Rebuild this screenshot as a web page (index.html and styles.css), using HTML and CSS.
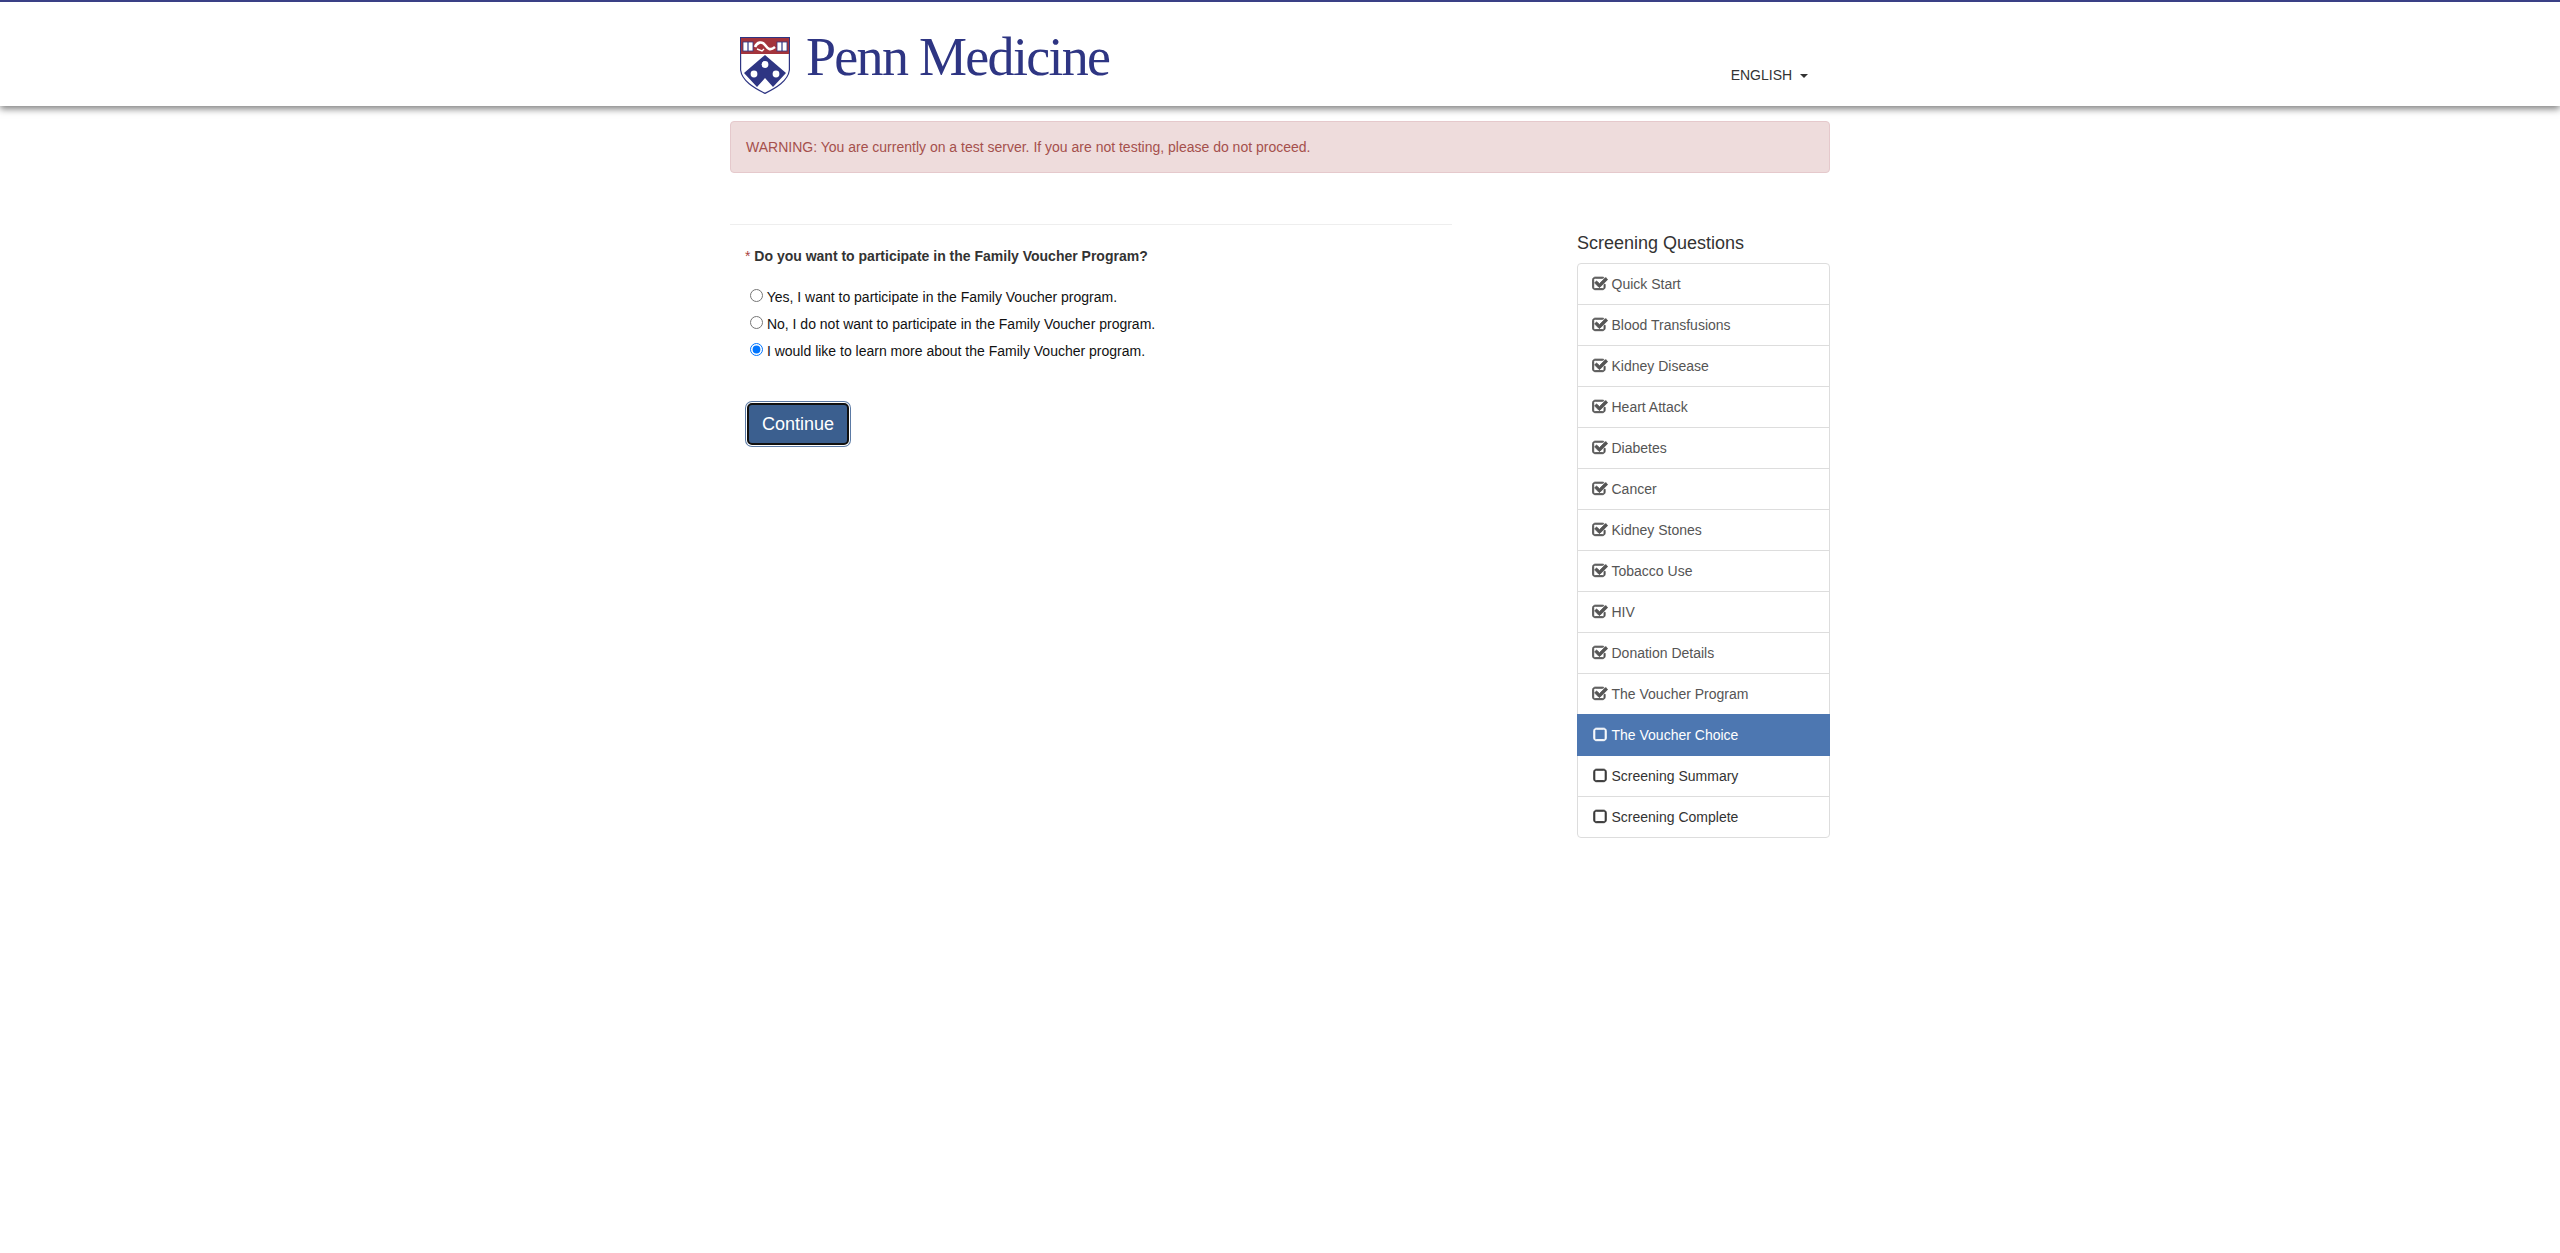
FILE: index.html
```html
<!doctype html>
<html>
    <head>
        <title>Penn Medicine - Screening Questions</title>
        <link rel="stylesheet" href="styles.css">
    </head>
    <body>
        <svg class="icon_defs" width="0" height="0">
            <symbol id="icon_checked" viewBox="0 0 1792 1792">
                <path fill="currentColor" stroke="currentColor" stroke-width="100" d="M1472 930v318q0 119-84.5 203.5t-203.5 84.5h-832q-119 0-203.5-84.5t-84.5-203.5v-832q0-119 84.5-203.5t203.5-84.5h832q63 0 117 25 15 7 18 23 3 17-9 29l-49 49q-10 10-23 10-3 0-9-2-23-6-45-6h-832q-66 0-113 47t-47 113v832q0 66 47 113t113 47h832q66 0 113-47t47-113v-254q0-13 9-22l64-64q10-10 23-10 6 0 12 3 20 8 20 29zm231-489l-814 814q-24 24-57 24t-57-24l-430-430q-24-24-24-57t24-57l110-110q24-24 57-24t57 24l263 263 647-647q24-24 57-24t57 24l110 110q24 24 24 57t-24 57z"/>
            </symbol>
            <symbol id="icon_empty" viewBox="0 0 1792 1792">
                <path fill="currentColor" stroke="currentColor" stroke-width="100" d="M1312 256h-832q-66 0-113 47t-47 113v832q0 66 47 113t113 47h832q66 0 113-47t47-113v-832q0-66-47-113t-113-47zm288 160v832q0 119-84.5 203.5t-203.5 84.5h-832q-119 0-203.5-84.5t-84.5-203.5v-832q0-119 84.5-203.5t203.5-84.5h832q119 0 203.5 84.5t84.5 203.5z"/>
            </symbol>
        </svg>

        <div class="top_bar">
            <div class="page_width header_row">
                <div class="logo">
                    <svg class="shield" width="50" height="57" viewBox="0 0 50 57">
                        <path d="M0.6 0.6 H49.4 V33 C48 44 36 51 25 56.4 C14 51 2 44 0.6 33 Z" fill="#fff" stroke="#2e3583" stroke-width="1.2"/>
                        <rect x="1" y="1" width="48" height="16" fill="#a3343c"/>
                        <rect x="3" y="5" width="10" height="9" fill="#fff" stroke="#2e3583" stroke-width="0.8"/>
                        <path d="M8 5 V14" stroke="#2e3583" stroke-width="1.2"/>
                        <rect x="37" y="5" width="10" height="9" fill="#fff" stroke="#2e3583" stroke-width="0.8"/>
                        <path d="M42 5 V14" stroke="#2e3583" stroke-width="1.2"/>
                        <path d="M15 10 C17 5 22 4 25 8 C28 12 30 14 35 10" fill="none" stroke="#fff" stroke-width="2.6"/>
                        <path d="M17 12 L22 14 L24 12" fill="none" stroke="#fff" stroke-width="1.4"/>
                        <path d="M25 18 L46 36 L33 50 L25 41 L17 50 L4 36 Z" fill="#2e3583"/>
                        <circle cx="25" cy="27.5" r="3.4" fill="#fff"/>
                        <circle cx="14" cy="37" r="3.4" fill="#fff"/>
                        <circle cx="36" cy="37" r="3.4" fill="#fff"/>
                    </svg>
                    <span class="logo_text">Penn Medicine</span>
                </div>
                <a class="lang_menu" href="#">ENGLISH <span class="caret"></span></a>
            </div>
        </div>

        <div class="page_width">
            <div class="alert">WARNING: You are currently on a test server. If you are not testing, please do not proceed.</div>

            <div class="columns">
                <div class="main_col">
                    <hr class="rule">
                    <form class="question">
                        <p class="question_title"><span class="required">*</span> Do you want to participate in the Family Voucher Program?</p>
                        <label class="choice"><input type="radio" name="voucher"> Yes, I want to participate in the Family Voucher program.</label>
                        <label class="choice"><input type="radio" name="voucher"> No, I do not want to participate in the Family Voucher program.</label>
                        <label class="choice"><input type="radio" name="voucher" checked> I would like to learn more about the Family Voucher program.</label>
                        <button class="btn_continue" type="button">Continue</button>
                    </form>
                </div>

                <div class="side_col">
                    <h4>Screening Questions</h4>
                    <ul class="steps">
                        <li class="done"><svg class="step_icon"><use href="#icon_checked"/></svg>Quick Start</li>
                        <li class="done"><svg class="step_icon"><use href="#icon_checked"/></svg>Blood Transfusions</li>
                        <li class="done"><svg class="step_icon"><use href="#icon_checked"/></svg>Kidney Disease</li>
                        <li class="done"><svg class="step_icon"><use href="#icon_checked"/></svg>Heart Attack</li>
                        <li class="done"><svg class="step_icon"><use href="#icon_checked"/></svg>Diabetes</li>
                        <li class="done"><svg class="step_icon"><use href="#icon_checked"/></svg>Cancer</li>
                        <li class="done"><svg class="step_icon"><use href="#icon_checked"/></svg>Kidney Stones</li>
                        <li class="done"><svg class="step_icon"><use href="#icon_checked"/></svg>Tobacco Use</li>
                        <li class="done"><svg class="step_icon"><use href="#icon_checked"/></svg>HIV</li>
                        <li class="done"><svg class="step_icon"><use href="#icon_checked"/></svg>Donation Details</li>
                        <li class="done"><svg class="step_icon"><use href="#icon_checked"/></svg>The Voucher Program</li>
                        <li class="active"><svg class="step_icon"><use href="#icon_empty"/></svg>The Voucher Choice</li>
                        <li><svg class="step_icon"><use href="#icon_empty"/></svg>Screening Summary</li>
                        <li><svg class="step_icon"><use href="#icon_empty"/></svg>Screening Complete</li>
                    </ul>
                </div>
            </div>
        </div>
    </body>
</html>
```

FILE: styles.css
```css
body {
    padding: 0;
    margin: 0;
    font-family: "Liberation Sans", Arial, sans-serif;
    font-size: 14px;
    color: #333;
    background-color: #fff;
}
.icon_defs {
    display: block;
    height: 0;
}
.page_width {
    width: 1100px;
    margin-left: auto;
    margin-right: auto;
}
.top_bar {
    height: 104px;
    border-top: 2px solid #3a4086;
    background-color: #fff;
    box-shadow: 0 3px 7px rgba(0, 0, 0, 0.5);
}
.header_row {
    display: flex;
    justify-content: space-between;
    height: 100%;
}
.logo {
    display: flex;
    align-items: flex-start;
    padding: 35px 0 0 10px;
}
.logo_text {
    margin: -10px 0 0 16px;
    font-family: "Liberation Serif", "Times New Roman", serif;
    font-size: 54px;
    line-height: 60px;
    letter-spacing: -1.7px;
    color: #2e3583;
}
.lang_menu {
    margin: 65px 22px 0 0;
    font-size: 14px;
    line-height: 16px;
    color: #333;
    text-decoration: none;
}
.caret {
    display: inline-block;
    width: 0;
    height: 0;
    margin-left: 4px;
    vertical-align: middle;
    border-top: 4px solid #333;
    border-left: 4px solid transparent;
    border-right: 4px solid transparent;
}
.alert {
    margin-top: 15px;
    padding: 15px;
    line-height: 20px;
    font-size: 14px;
    color: #a5504c;
    background-color: #eedcdc;
    border: 1px solid #e5c9cc;
    border-radius: 4px;
}
.columns {
    display: flex;
    justify-content: space-between;
}
.main_col {
    width: 722px;
}
.rule {
    margin: 51px 0 0 0;
    border: 0;
    border-top: 1px solid #eee;
}
.question {
    padding: 21px 15px 0 15px;
}
.question_title {
    margin: 0 0 18px 0;
    font-size: 14px;
    line-height: 20px;
    font-weight: bold;
}
.required {
    color: #a94442;
    font-weight: normal;
}
.choice {
    display: block;
    height: 27px;
    line-height: 27px;
    padding-left: 5px;
    font-size: 14px;
    color: #111;
}
.choice input {
    margin: 0;
    width: 13px;
    height: 13px;
    vertical-align: 0;
}
.btn_continue {
    display: block;
    margin: 38px 0 0 2px;
    width: 102px;
    height: 42px;
    padding: 0;
    font-family: inherit;
    font-size: 18px;
    color: #fff;
    background-color: #3b5f8f;
    border: 2px solid #111;
    border-radius: 5px;
    box-shadow: 0 0 0 1px #fff, 0 0 0 2px #5b7aa5;
}
.side_col {
    width: 253px;
}
h4 {
    margin: 60px 0 10px 0;
    font-size: 18px;
    font-weight: normal;
    line-height: 20px;
}
.steps {
    margin: 0;
    padding: 0;
    list-style: none;
    border: 1px solid #ddd;
    border-radius: 4px;
}
.steps li {
    display: flex;
    align-items: center;
    height: 40px;
    padding-left: 14px;
    border-top: 1px solid #ddd;
    font-size: 14px;
}
.steps li:first-child {
    border-top: 0;
}
.steps li.done {
    color: #555;
}
.steps li.active {
    margin: 0 -1px;
    height: 42px;
    padding-left: 15px;
    border-top: 0;
    color: #fff;
    background-color: #4d77b1;
}
.steps li.active + li {
    border-top: 0;
}
.step_icon {
    flex: none;
    width: 16px;
    height: 16px;
    margin-right: 3.5px;
}
```
